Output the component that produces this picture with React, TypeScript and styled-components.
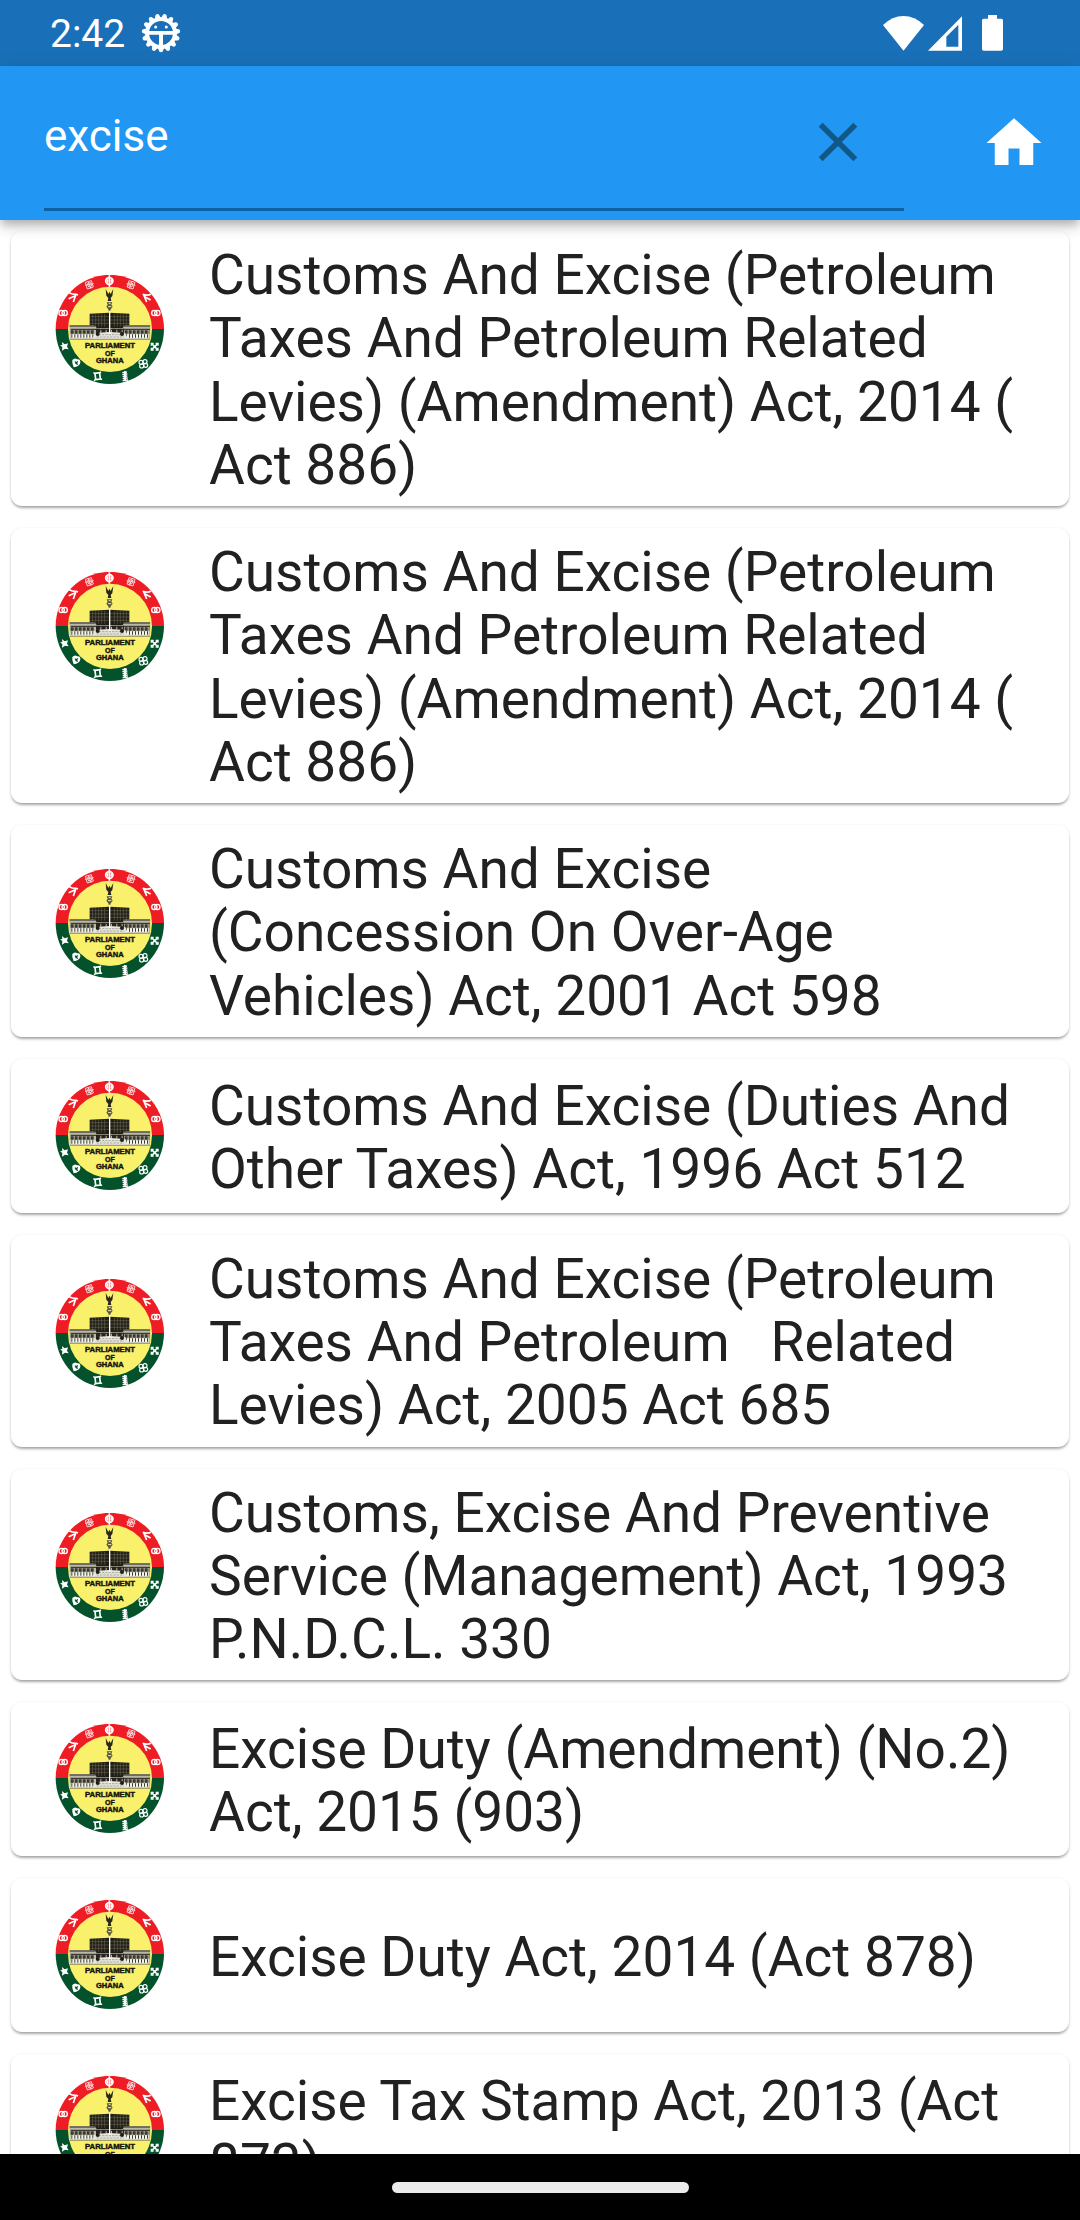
import styled, { createGlobalStyle } from "styled-components";

const GlobalStyle = createGlobalStyle`
  * {
    box-sizing: border-box;
  }

  body {
    margin: 0;
    background-color: #fff;
    font-family: Roboto, "Liberation Sans", sans-serif;
  }
`;

const Screen = styled.div`
  width: 1080px;
  height: 2220px;
  display: flex;
  flex-direction: column;
  overflow: hidden;
  background-color: #fff;
`;

const StatusBar = styled.div`
  height: 66px;
  flex: none;
  display: flex;
  align-items: center;
  padding: 0 77px 0 50px;
  background-color: #1a70b8;
  color: #fff;
`;

const Clock = styled.span`
  width: 91px;
  font-size: 39px;
  line-height: 46px;
  padding-top: 2px;
`;

const StatusIcons = styled.div`
  margin-left: auto;
  display: flex;
  align-items: center;
`;

const StatusIcon = styled.svg<{ $gap?: number }>`
  display: block;
  margin-left: ${({ $gap }) => $gap ?? 0}px;
`;

const AppBar = styled.header`
  height: 154px;
  flex: none;
  display: flex;
  align-items: center;
  justify-content: space-between;
  padding: 0 33px 0 44px;
  background-color: #2196f3;
  z-index: 1;
  box-shadow:
    0 5px 8px -2px rgba(0, 0, 0, 0.2),
    0 9px 11px 0 rgba(0, 0, 0, 0.1),
    0 2px 18px 0 rgba(0, 0, 0, 0.1);
`;

const SearchField = styled.div`
  width: 860px;
  height: 135px;
  display: flex;
  align-items: center;
  justify-content: space-between;
  padding-right: 33px;
  border-bottom: 3px solid #0f5fa3;
`;

const Query = styled.span`
  color: #fff;
  font-size: 44px;
  line-height: 52px;
  padding-bottom: 12px;
`;

const IconButton = styled.button`
  width: 66px;
  height: 66px;
  padding: 0;
  border: none;
  background: transparent;
  cursor: pointer;

  svg {
    display: block;
    width: 66px;
    height: 66px;
  }
`;

const List = styled.main`
  flex: 1;
  min-height: 0;
  overflow: hidden;
  display: flex;
  flex-direction: column;
  gap: 22px;
  padding: 11px;
`;

const Card = styled.article<{ $tall: boolean }>`
  flex: none;
  min-height: 154px;
  display: flex;
  align-items: ${({ $tall }) => ($tall ? "flex-start" : "center")};
  gap: 44px;
  padding: ${({ $tall }) => ($tall ? "11px 44px" : "0 44px")};
  border-radius: 11px;
  background-color: #fff;
  box-shadow:
    0 3px 3px -1px rgba(0, 0, 0, 0.28),
    0 1px 3px rgba(0, 0, 0, 0.16);

  > svg {
    flex: none;
    margin-top: ${({ $tall }) => ($tall ? 33 : 0)}px;
  }
`;

const Title = styled.h2`
  margin: 0 0 -2px;
  padding-top: 2px;
  flex: 1;
  color: #212121;
  font-size: 55px;
  font-weight: 400;
  line-height: 63.25px;
  white-space: pre-wrap;
`;

const NavBar = styled.footer`
  height: 66px;
  flex: none;
  display: flex;
  align-items: center;
  justify-content: center;
  background-color: #000;
`;

const NavHandle = styled.div`
  width: 297px;
  height: 11px;
  border-radius: 6px;
  background-color: #ebebeb;
`;

const acts = [
  { title: "Customs And Excise (Petroleum Taxes And Petroleum Related Levies) (Amendment) Act, 2014 ( Act 886)", tall: true },
  { title: "Customs And Excise (Petroleum Taxes And Petroleum Related Levies) (Amendment) Act, 2014 ( Act 886)", tall: true },
  { title: "Customs And Excise (Concession On Over-Age Vehicles) Act, 2001 Act 598", tall: true },
  { title: "Customs And Excise (Duties And Other Taxes) Act, 1996 Act 512", tall: false },
  { title: "Customs And Excise (Petroleum Taxes And Petroleum   Related Levies) Act, 2005 Act 685", tall: true },
  { title: "Customs, Excise And Preventive Service (Management) Act, 1993 P.N.D.C.L. 330", tall: true },
  { title: "Excise Duty (Amendment) (No.2) Act, 2015 (903)", tall: false },
  { title: "Excise Duty Act, 2014 (Act 878)", tall: false },
  { title: "Excise Tax Stamp Act, 2013 (Act 873)", tall: false },
];

const teeth = Array.from({ length: 15 }, (_, i) => 90 + i * 24);

function GearIcon() {
  return (
    <StatusIcon width="40" height="40" viewBox="-60 -60 120 120">
      {teeth.map((deg) => (
        <path key={deg} d="M40 -10L51 -7Q58 -6 58 0Q58 6 51 7L40 10Z" fill="#fff" transform={`rotate(${deg})`} />
      ))}
      <circle r="42" fill="none" stroke="#fff" strokeWidth="12" />
      <path d="M-40 -6H40V5H6V42H-6V5H-40Z" fill="#fff" />
      <circle cx="-16" cy="-18" r="4.500" fill="#fff" />
      <circle cx="16" cy="-18" r="4.500" fill="#fff" />
    </StatusIcon>
  );
}

function Seal() {
  return (
    <svg width="110" height="110" viewBox="15 15 330 330">
      {/* two-colour ring */}
      <path d="M17 177A162.500 162.500 0 0 1 342 177Z" fill="#ee1c25" />
      <path d="M17 177A162.500 165 0 0 0 342 177Z" fill="#04522b" />
      <ellipse cx="180" cy="178" rx="126" ry="128" fill="#f9f06c" />

      {/* symbols around the ring */}
      <g fill="none" stroke="#fff" strokeWidth="4">
        <ellipse cx="178" cy="33" rx="11" ry="10" strokeWidth="5" />
        <path d="M178 16V50M172 28V38M184 28V38" strokeWidth="5" />
        <g opacity="0.8" strokeWidth="3">
          <path d="M106 37L124 32L130 51L112 57ZM112 41L122 38L125 48L116 51ZM105 46L131 41M114 33L123 56" />
          <path d="M255 37L237 32L231 51L249 57ZM249 41L239 38L236 48L245 51ZM256 46L230 41M247 33L238 56" />
        </g>
        <path d="M58 68Q68 74 79 73L84 75M78 73L70 96M74 78L56 86" strokeWidth="5" />
        <path d="M303 73Q292 78 278 73M281 74L290 96M284 80L302 90" strokeWidth="5" />
        <circle cx="35" cy="129" r="8" />
        <circle cx="44" cy="129" r="8" />
        <circle cx="313" cy="129" r="8" />
        <circle cx="322" cy="129" r="8" />
        <path d="M304 220L324 240M324 220L304 240" strokeWidth="5" />
        <path d="M304 227V220H311M317 220H324V227M304 233V240H311M317 240H324V233" strokeWidth="4" />
        <circle cx="273" cy="277" r="6" strokeWidth="3.500" />
        <circle cx="285" cy="275" r="6" strokeWidth="3.500" />
        <circle cx="275" cy="288" r="6" strokeWidth="3.500" />
        <circle cx="287" cy="286" r="6" strokeWidth="3.500" />
        <path d="M135 310L149 308L151 327L137 329Z" strokeWidth="5" />
        <path d="M130 308L137 312M153 305L148 310M132 332L138 327M156 329L150 325" />
        <path d="M224 304L226 333M217 308L231 306M217 314L232 312M218 320L232 318M218 326L233 324M218 332L234 330" />
      </g>
      <path d="M36 216L44 223L54 220L51 230L56 238L45 236L36 242L37 231L30 226L37 225Z" fill="#fff" />
      <path d="M67 270Q75 262 81 268Q92 266 91 278Q88 289 71 292Q65 280 67 270Z" fill="#fff" />
      <path d="M75 275L83 284M83 274L77 282" stroke="#04522b" strokeWidth="4" />

      {/* chamber building */}
      <path d="M119 131L178 128L238 131V180H119Z" fill="#201e17" />
      <path
        d="M128 131V170M137 131V170M146 131V170M155 131V170M164 131V170M193 131V170M202 131V170M211 131V170M220 131V170M229 131V170M120 140H237M120 150H237M120 160H237"
        stroke="#77735a"
        strokeWidth="1.500"
      />
      <path d="M58 166H134L140 174H218L224 166H301L300 207H60Z" fill="#b9b7a5" />
      <path d="M59 168H136M222 168H300M62 178H300" stroke="#24221e" strokeWidth="3" />
      <path d="M62 186H134M224 186H298" stroke="#39372f" strokeWidth="11" strokeDasharray="9 3" />
      <path d="M62 199H296" stroke="#f6f5ec" strokeWidth="13" />
      <path d="M64 198H132M228 198H298" stroke="#3b3931" strokeWidth="10" strokeDasharray="3 6" />
      <path d="M138 182H222" stroke="#26241f" strokeWidth="12" strokeDasharray="13 3" />
      <path d="M136 190L178 186L226 190L234 207H126Z" fill="#e7e6de" />
      <path d="M146 194H216M140 201H222" stroke="#8b897d" strokeWidth="2" strokeDasharray="7 3" />
      <path d="M60 208H300" stroke="#67655a" strokeWidth="2" />
      <circle cx="143" cy="192" r="6" fill="#1d1c18" />
      <circle cx="216" cy="192" r="6" fill="#1d1c18" />

      {/* eagle and mace */}
      <path d="M167 57L175 72L178 65L182 72L190 57L187 78L182 84L184 93H173L175 84L169 77Z" fill="#2a281d" />
      <path d="M170 97H187L184 104L188 110L182 118L180 126H177L175 118L169 110L173 104Z" fill="#57533b" />
      <path d="M176 101H182M174 110H184" stroke="#f5efb3" strokeWidth="3" />
      <path d="M179 122V192" stroke="#fff" strokeWidth="4" />

      <g fill="#16140c" fontFamily="'Liberation Sans', Arial, sans-serif" fontWeight="700" fontSize="20.500" stroke="#16140c" strokeWidth="1.200">
        <text x="105" y="235" textLength="150" lengthAdjust="spacingAndGlyphs">PARLIAMENT</text>
        <text x="165" y="257" textLength="29" lengthAdjust="spacingAndGlyphs">OF</text>
        <text x="138" y="279" textLength="83" lengthAdjust="spacingAndGlyphs">GHANA</text>
      </g>
    </svg>
  );
}

function App() {
  return (
    <>
      <GlobalStyle />
      <Screen>
        <StatusBar>
          <Clock>2:42</Clock>
          <GearIcon />
          <StatusIcons>
            <StatusIcon width="41" height="35" viewBox="0 0 123 105">
              <path d="M0 27Q28 0 61.500 0T123 27L61.500 104Z" fill="#fff" />
            </StatusIcon>
            <StatusIcon $gap={4} width="34" height="35" viewBox="0 0 102 105">
              <path d="M0 104H102V1ZM55 62L91 26V92H55Z" fill="#fff" fillRule="evenodd" />
            </StatusIcon>
            <StatusIcon $gap={20} width="21" height="36" viewBox="0 0 63 108">
              <path d="M18 0H45V11H58Q63 11 63 16V102Q63 107 58 107H5Q0 107 0 102V16Q0 11 5 11H18Z" fill="#fff" />
            </StatusIcon>
          </StatusIcons>
        </StatusBar>
        <AppBar>
          <SearchField>
            <Query>excise</Query>
            <IconButton aria-label="Clear">
              <svg viewBox="0 0 24 24">
                <path
                  d="M19 6.410L17.590 5L12 10.590L6.410 5L5 6.410L10.590 12L5 17.590L6.410 19L12 13.410L17.590 19L19 17.590L13.410 12Z"
                  fill="#125886"
                />
              </svg>
            </IconButton>
          </SearchField>
          <IconButton aria-label="Home">
            <svg viewBox="0 0 24 24">
              <path d="M10 20v-6h4v6h5v-8h3L12 3 2 12h3v8z" fill="#fff" />
            </svg>
          </IconButton>
        </AppBar>
        <List>
          {acts.map((act, index) => (
            <Card key={index} $tall={act.tall}>
              <Seal />
              <Title>{act.title}</Title>
            </Card>
          ))}
        </List>
        <NavBar>
          <NavHandle />
        </NavBar>
      </Screen>
    </>
  );
}

export default App;
